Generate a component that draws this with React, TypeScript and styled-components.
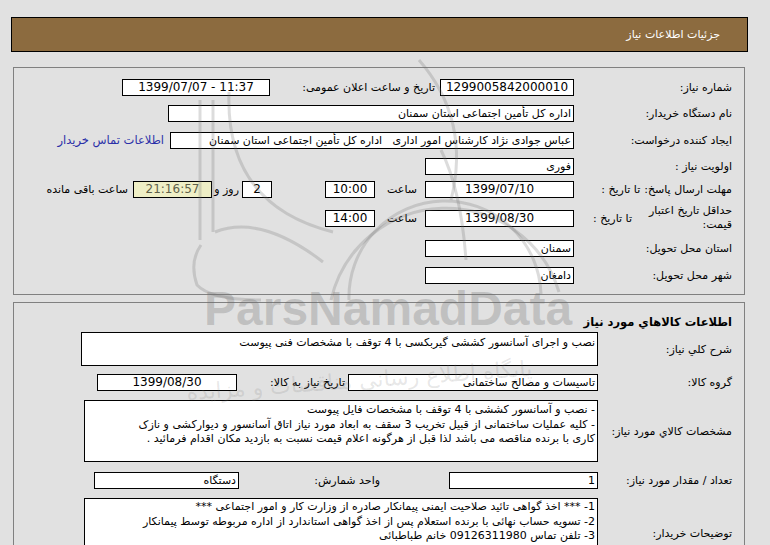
import React from "react";
import styled, { createGlobalStyle } from "styled-components";

const GlobalStyle = createGlobalStyle`
  html, body {
    margin: 0;
    padding: 0;
    background: #e1e1e1;
  }
  body {
    font-family: "DejaVu Sans", "Noto Sans", sans-serif;
    font-size: 11px;
    color: #000;
  }
`;

const Page = styled.div`
  position: relative;
  width: 737px;
  margin-left: 11px;
  padding-top: 17px;
  direction: rtl;
`;

const TitleBar = styled.div`
  height: 33px;
  border: 1px solid #000;
  background: #8c6b3f;
  color: #fff;
  display: flex;
  align-items: center;
  padding-right: 27px;
  font-size: 11px;
`;

const Panel = styled.div<{ $top: number }>`
  margin: ${({ $top }) => $top}px 3px 0 2px;
  border: 1px solid #808080;
  padding-right: 12px;
`;

const Row = styled.div<{ $h: number }>`
  display: flex;
  align-items: center;
  height: ${({ $h }) => $h}px;
`;

const Spacer = styled.div<{ $h: number }>`
  height: ${({ $h }) => $h}px;
`;

const LabelCell = styled.div<{ $w: number }>`
  width: ${({ $w }) => $w}px;
  flex-shrink: 0;
  display: flex;
  align-items: center;
  gap: 4px;
  white-space: nowrap;
`;

const MainLabel = styled.span<{ $w?: number }>`
  ${({ $w }) => ($w ? `width: ${$w}px; white-space: normal; line-height: 14px;` : "")}
`;

const InlineLabel = styled.div<{ $w?: number; $pad?: number }>`
  ${({ $w }) => ($w ? `width: ${$w}px;` : "")}
  box-sizing: border-box;
  flex-shrink: 0;
  padding-right: ${({ $pad }) => $pad ?? 5}px;
  white-space: nowrap;
`;

const Field = styled.div<{
  $w: number;
  $h?: number;
  $center?: boolean;
  $multi?: boolean;
  $yellow?: boolean;
  $padTop?: number;
}>`
  box-sizing: border-box;
  width: ${({ $w }) => $w}px;
  height: ${({ $h }) => $h ?? 17}px;
  flex-shrink: 0;
  border: 1px solid #000;
  background: ${({ $yellow }) => ($yellow ? "#efefc6" : "#fff")};
  color: ${({ $yellow }) => ($yellow ? "#5f5f4a" : "#000")};
  padding: ${({ $multi, $padTop }) => ($multi ? `${$padTop ?? 1}px 2px 0` : "0 2px")};
  line-height: ${({ $multi }) => ($multi ? "14.5px" : "15px")};
  text-align: ${({ $center }) => ($center ? "center" : "right")};
  white-space: ${({ $multi }) => ($multi ? "normal" : "nowrap")};
  overflow: hidden;
  font-size: ${({ $center }) => ($center ? "12px" : "11px")};
`;

const Gap = styled.div<{ $w: number }>`
  width: ${({ $w }) => $w}px;
  flex-shrink: 0;
`;

const Link = styled.a`
  color: #2a2fa8;
  text-decoration: none;
  padding-right: 6px;
  white-space: nowrap;
  font-size: 11.5px;
`;

const SectionTitle = styled.div`
  height: 20px;
  display: flex;
  align-items: center;
  font-weight: bold;
  font-size: 11.5px;
`;

const Watermark = styled.div`
  position: absolute;
  inset: 0;
  pointer-events: none;
  overflow: hidden;
`;

const WatermarkText = styled.div`
  position: absolute;
  left: 193px;
  top: 281px;
  direction: ltr;
  font-family: "Liberation Sans", Arial, sans-serif;
  font-weight: bold;
  font-size: 48px;
  color: rgba(110, 110, 110, 0.28);
`;

const WatermarkSub = styled.div`
  position: absolute;
  left: 175px;
  top: 368px;
  font-size: 22px;
  color: rgba(110, 110, 110, 0.16);
  white-space: nowrap;
  transform: rotate(-4deg);
`;

const WatermarkLogo = styled.svg`
  position: absolute;
  left: 0;
  top: 0;
`;

const Logo = () => (
  <WatermarkLogo width="737" height="545" viewBox="0 0 737 545">
    <g fill="none" stroke="rgba(110,110,110,0.24)" strokeWidth="3">
      <path d="M189 100 V 240" />
      <path d="M202 100 V 232" />
      <path d="M218 92 Q 214 205 322 232" />
      <path d="M204 232 Q 250 214 312 262" />
      <path d="M190 245 Q 178 262 186 285 Q 200 300 250 300" />
      <path d="M320 300 A 118 118 0 0 1 548 292" />
      <path d="M338 300 A 96 96 0 0 1 530 294" />
      <path d="M408 60 Q 460 120 440 200" />
      <path d="M430 150 Q 450 190 455 260" />
    </g>
  </WatermarkLogo>
);

export default function App() {
  return (
    <>
      <GlobalStyle />
      <Page>
        <TitleBar>جزئیات اطلاعات نیاز</TitleBar>

        <Panel $top={15}>
          <Spacer $h={6} />
          <Row $h={26}>
            <LabelCell $w={158}>شماره نیاز:</LabelCell>
            <Field $w={134} $center dir="ltr">1299005842000010</Field>
            <InlineLabel $w={170}>تاریخ و ساعت اعلان عمومی:</InlineLabel>
            <Field $w={148} $center dir="ltr">1399/07/07 - 11:37</Field>
          </Row>
          <Row $h={27}>
            <LabelCell $w={158}>نام دستگاه خریدار:</LabelCell>
            <Field $w={406}>اداره کل تأمین اجتماعی استان سمنان</Field>
          </Row>
          <Row $h={26}>
            <LabelCell $w={158}>ایجاد کننده درخواست:</LabelCell>
            <Field $w={404}>عباس جوادی نژاد کارشناس امور اداری&nbsp;&nbsp; اداره کل تأمین اجتماعی استان سمنان</Field>
            <Link href="#">اطلاعات تماس خریدار</Link>
          </Row>
          <Row $h={26}>
            <LabelCell $w={158}>اولویت نیاز :</LabelCell>
            <Field $w={149}>فوری</Field>
          </Row>
          <Row $h={21}>
            <LabelCell $w={158}>
              <MainLabel>مهلت ارسال پاسخ:</MainLabel>
              <span>تا تاریخ :</span>
            </LabelCell>
            <Field $w={149} $center dir="ltr">1399/07/10</Field>
            <InlineLabel $w={50} $pad={8}>ساعت</InlineLabel>
            <Field $w={50} $center dir="ltr">10:00</Field>
            <Gap $w={53} />
            <Field $w={30} $center>2</Field>
            <InlineLabel $w={30} $pad={3}>روز و</InlineLabel>
            <Field $w={79} $center $yellow dir="ltr">21:16:57</Field>
            <InlineLabel>ساعت باقی مانده</InlineLabel>
          </Row>
          <Row $h={36}>
            <LabelCell $w={158}>
              <MainLabel $w={96}>حداقل تاریخ اعتبار قیمت:</MainLabel>
              <span>تا تاریخ :</span>
            </LabelCell>
            <Field $w={149} $center dir="ltr">1399/08/30</Field>
            <InlineLabel $w={50} $pad={8}>ساعت</InlineLabel>
            <Field $w={50} $center dir="ltr">14:00</Field>
          </Row>
          <Row $h={24}>
            <LabelCell $w={158}>استان محل تحویل:</LabelCell>
            <Field $w={149}>سمنان</Field>
          </Row>
          <Row $h={30}>
            <LabelCell $w={158}>شهر محل تحویل:</LabelCell>
            <Field $w={149}>دامغان</Field>
          </Row>
          <Spacer $h={4} />
        </Panel>

        <Panel $top={7}>
          <Spacer $h={9} />
          <SectionTitle>اطلاعات کالاهاي مورد نیاز</SectionTitle>
          <Row $h={34}>
            <LabelCell $w={134}>شرح کلي نیاز:</LabelCell>
            <Field $w={517} $h={34} $multi $padTop={3}>
              نصب و اجرای آسانسور کششی گیربکسی با 4 توقف با مشخصات فنی پیوست
            </Field>
          </Row>
          <Row $h={32}>
            <LabelCell $w={134}>گروه کالا:</LabelCell>
            <Field $w={250}>تاسیسات و مصالح ساختمانی</Field>
            <InlineLabel $w={111} $pad={3}>تاریخ نیاز به کالا:</InlineLabel>
            <Field $w={140} $center dir="ltr">1399/08/30</Field>
          </Row>
          <Row $h={66}>
            <LabelCell $w={134}>مشخصات کالاي مورد نیاز:</LabelCell>
            <Field $w={514} $h={62} $multi $padTop={2}>
              - نصب و آسانسور کششی با 4 توقف با مشخصات فایل پیوست
              <br />
              - کلیه عملیات ساختمانی از قبیل تخریب 3 سقف به ابعاد مورد نیاز اتاق آسانسور و دیوارکشی و نازک
              <br />
              کاری با برنده مناقصه می باشد لذا قبل از هرگونه اعلام قیمت نسبت به بازدید مکان اقدام فرمائید .
            </Field>
          </Row>
          <Row $h={32}>
            <LabelCell $w={134}>تعداد / مقدار مورد نیاز:</LabelCell>
            <Field $w={149}>1</Field>
            <InlineLabel $w={210} $pad={69}>واحد شمارش:</InlineLabel>
            <Field $w={145}>دستگاه</Field>
          </Row>
          <Row $h={74}>
            <LabelCell $w={134}>توضیحات خریدار:</LabelCell>
            <Field $w={514} $h={70} $multi>
              1- *** اخذ گواهی تائید صلاحیت ایمنی پیمانکار صادره از وزارت کار و امور اجتماعی ***
              <br />
              2- تسویه حساب نهائی با برنده استعلام پس از اخذ گواهی استاندارد از اداره مربوطه توسط پیمانکار
              <br />
              3- تلفن تماس 09126311980 خانم طباطبائی
            </Field>
          </Row>
        </Panel>

        <Watermark>
          <Logo />
          <WatermarkText>ParsNamadData</WatermarkText>
          <WatermarkSub>پایگاه اطلاع رسانی مناقصات و مزایده</WatermarkSub>
        </Watermark>
      </Page>
    </>
  );
}
